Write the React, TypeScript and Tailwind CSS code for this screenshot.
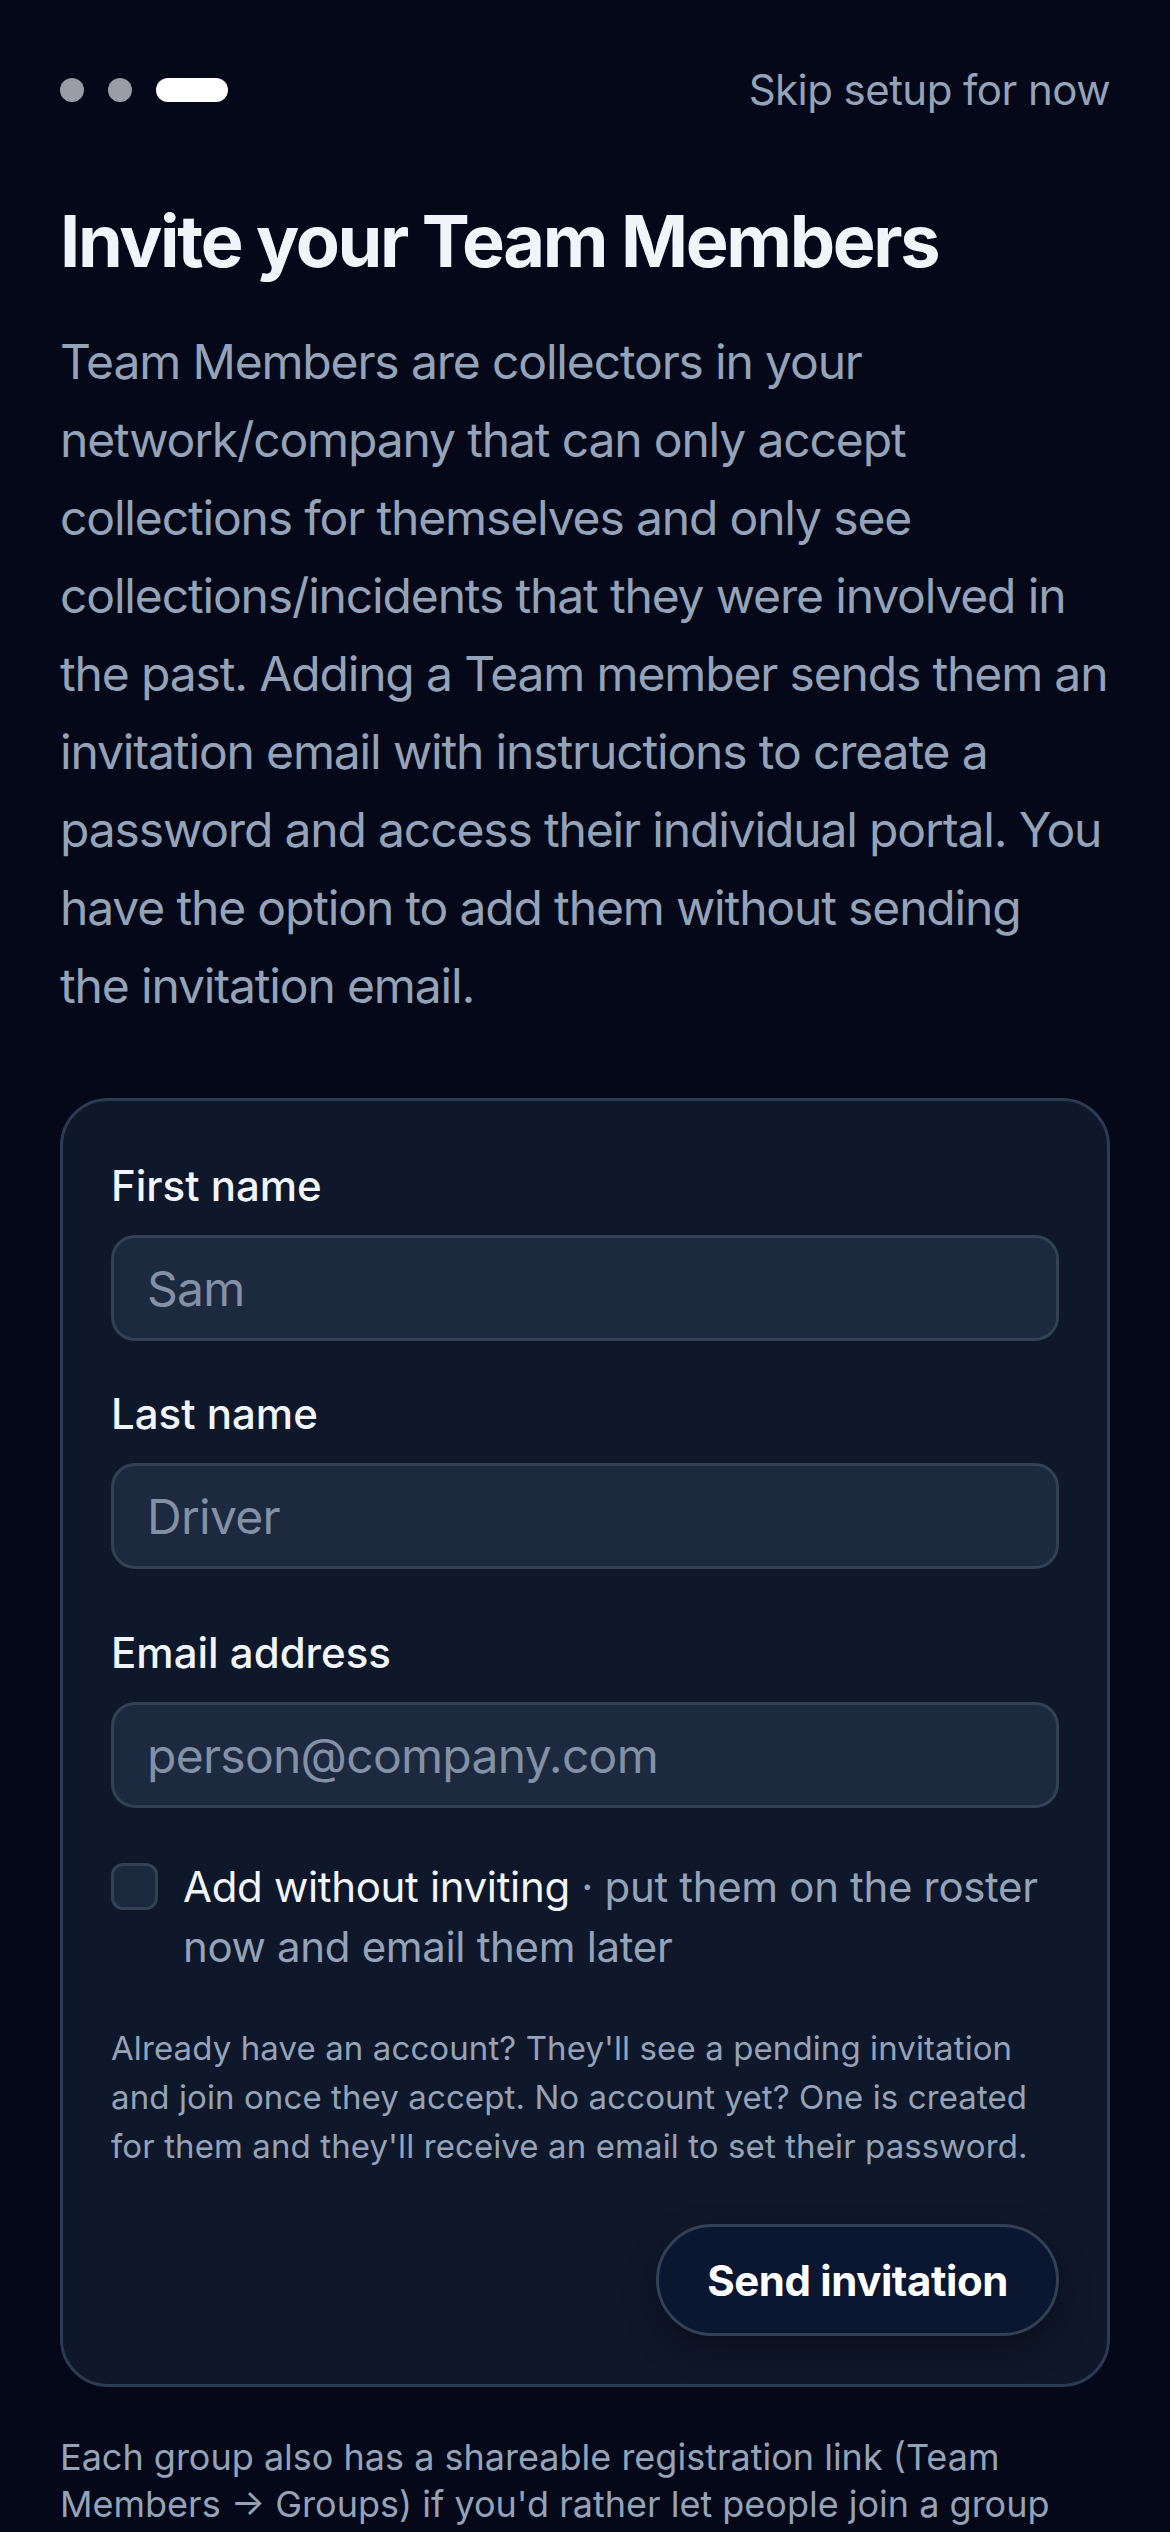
import React from "react";

const fields = [
  { id: "first", label: "First name", placeholder: "Sam", gap: "mt-0" },
  { id: "last", label: "Last name", placeholder: "Driver", gap: "mt-[43px]" },
  { id: "email", label: "Email address", placeholder: "person@company.com", gap: "mt-[54px]" },
];

export default function App() {
  return (
    <div className="min-h-screen w-full bg-[#040818] px-[60px] pt-[60px] pb-[120px] font-['Inter',sans-serif] text-[#f1f5f9]">
      {/* progress + skip */}
      <header className="flex h-[60px] items-center justify-between">
        <div className="flex items-center gap-[24px]">
          <span className="size-[24px] rounded-full bg-[#9a9ca8]" />
          <span className="size-[24px] rounded-full bg-[#9a9ca8]" />
          <span className="h-[24px] w-[72px] rounded-full bg-white" />
        </div>
        <button type="button" className="text-[42px] leading-[60px] tracking-[-0.013em] text-[#94a3b8]">
          Skip setup for now
        </button>
      </header>

      <h1 className="mt-[76px] text-[72px] font-bold leading-[90px] tracking-[-0.032em]">Invite your Team Members</h1>
      <p className="mt-[37px] text-[48px] leading-[78px] tracking-[-0.024em] text-[#94a3b8]">
        Team Members are collectors in your network/company that can only accept collections for themselves and only see
        collections/incidents that they were involved in the past. Adding a Team member sends them an invitation email
        with instructions to create a password and access their individual portal. You have the option to add them
        without sending
        <br />
        the invitation email.
      </p>

      <form className="mt-[73px] rounded-[48px] border-[3px] border-[#2c3a52] bg-[#0f172a] px-[48px] pt-[55px] pb-[48px]">
        {fields.map((f) => (
          <div key={f.id} className={f.gap}>
            <label htmlFor={f.id} className="block text-[42px] font-medium leading-[60px] text-[#f1f5f9]">
              {f.label}
            </label>
            <input
              id={f.id}
              placeholder={f.placeholder}
              className="mt-[19px] block h-[106px] w-full rounded-[24px] border-[3px] border-[#334155] bg-[#1d293e] px-[33px] text-[48px] tracking-[-0.015em] text-[#f1f5f9] outline-none placeholder:text-[#8391a7]"
            />
          </div>
        ))}

        <div className="mt-[49px] flex items-start gap-[25px]">
          <span className="mt-[6px] size-[47px] shrink-0 rounded-[12px] border-[3px] border-[#334155] bg-[#1d293e]" />
          <p className="text-[42px] leading-[60px] tracking-[-0.008em] text-[#94a3b8]">
            <span className="text-[#f1f5f9]">Add without inviting</span> · put them on the roster now and email them later
          </p>
        </div>

        <p className="mt-[47px] text-[33px] leading-[49px] tracking-[0.003em] text-[#94a3b8]">
          Already have an account? They'll see a pending invitation and join once they accept. No account yet? One is
          created for them and they'll receive an email to set their password.
        </p>

        <div className="mt-[53px] flex justify-end">
          <button
            type="button"
            className="h-[112px] rounded-full border-[3px] border-[#334155] bg-[#0b1630] px-[48px] text-[42px] font-bold tracking-[-0.01em] text-white shadow-[0_14px_32px_rgba(0,0,0,0.35)]"
          >
            Send invitation
          </button>
        </div>
      </form>

      <p className="mt-[47px] text-[36px] leading-[47px] text-[#94a3b8]">
        Each group also has a shareable registration link (Team Members → Groups) if you'd rather let people join a group
        themselves.
      </p>
    </div>
  );
}
